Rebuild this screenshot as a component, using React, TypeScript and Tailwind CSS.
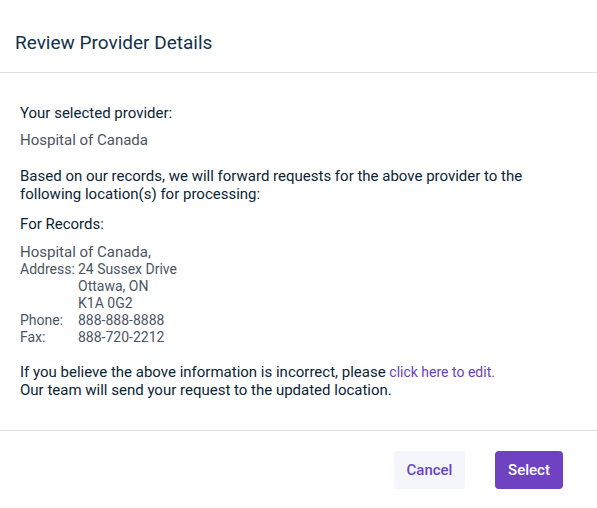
export default function App() {
  return (
    <div className="w-[597px] h-[508px] bg-white font-['Roboto',sans-serif] text-[#0b2535]">
      <div className="h-[73px] px-[15px] flex items-center border-b border-[#e2e2e2]">
        <h1 className="text-[19px] text-[#13324a] pt-[15px]">Review Provider Details</h1>
      </div>

      <div className="px-5 pt-[31px] pb-[31px] border-b border-[#e2e2e2] text-[15px] leading-[18px]">
        <p>Your selected provider:</p>
        <p className="text-[#4b5563] mt-[9px]">Hospital of Canada</p>

        <p className="mt-[18px]">
          Based on our records, we will forward requests for the above provider to the following
          location(s) for processing:
        </p>

        <p className="mt-[12px]">For Records:</p>

        <div className="text-[#4b5563] text-[14px] mt-[11px] leading-[17px]">
          <p className="text-[15px]">Hospital of Canada,</p>
          <div className="grid grid-cols-[58px_1fr]">
            <span>Address:</span>
            <span>24 Sussex Drive</span>
            <span></span>
            <span>Ottawa, ON</span>
            <span></span>
            <span>K1A 0G2</span>
            <span>Phone:</span>
            <span>888-888-8888</span>
            <span>Fax:</span>
            <span>888-720-2212</span>
          </div>
        </div>

        <p className="mt-[17px]">
          If you believe the above information is incorrect, please{" "}
          <a href="#" className="text-[14px] text-[#6b3fb5]">
            click here to edit.
          </a>
          <br />
          Our team will send your request to the updated location.
        </p>
      </div>

      <div className="flex justify-end gap-[30px] pt-5 pr-[34px]">
        <button className="w-[71px] h-[38px] rounded bg-[#f4f6fb] text-[#6b46c1] text-[15px] font-medium">
          Cancel
        </button>
        <button className="w-[68px] h-[38px] rounded bg-[#6f42c1] text-white text-[15px] font-medium">
          Select
        </button>
      </div>
    </div>
  );
}
